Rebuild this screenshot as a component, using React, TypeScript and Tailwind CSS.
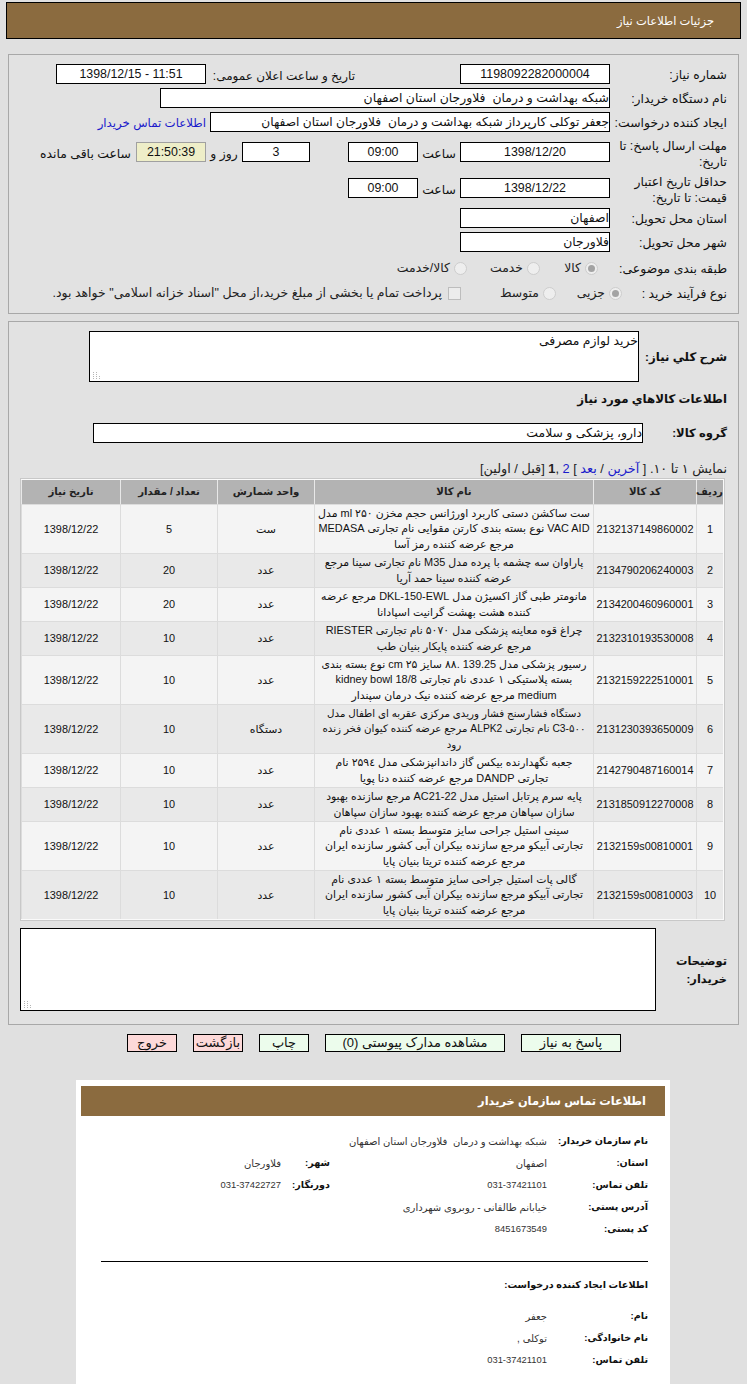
import React from "react";

const rows: [string, string, string, string, string, string, string][] = [
  ["1", "2132137149860002", "ست ساکشن دستی کاربرد اورژانس حجم مخزن ۲۵۰ ml مدل\nVAC AID نوع بسته بندی کارتن مقوایی نام تجارتی MEDASA\nمرجع عرضه کننده رمز آسا", "ست", "5", "1398/12/22", "h-[49px]"],
  ["2", "2134790206240003", "پاراوان سه چشمه با پرده مدل M35 نام تجارتی سینا مرجع\nعرضه کننده سینا حمد آریا", "عدد", "20", "1398/12/22", "h-[34px]"],
  ["3", "2134200460960001", "مانومتر طبی گاز اکسیژن مدل DKL-150-EWL مرجع عرضه\nکننده هشت بهشت گرانیت اسپادانا", "عدد", "20", "1398/12/22", "h-[34px]"],
  ["4", "2132310193530008", "چراغ قوه معاینه پزشکی مدل ۵۰۷۰ نام تجارتی RIESTER\nمرجع عرضه کننده پایکار بنیان طب", "عدد", "10", "1398/12/22", "h-[34px]"],
  ["5", "2132159222510001", "رسیور پزشکی مدل 139.25 .۸۸ سایز ۲۵ cm نوع بسته بندی\nبسته پلاستیکی ۱ عددی نام تجارتی kidney bowl 18/8\nmedium مرجع عرضه کننده نیک درمان سپندار", "عدد", "10", "1398/12/22", "h-[49px]"],
  ["6", "2131230393650009", "دستگاه فشارسنج فشار وریدی مرکزی عقربه ای اطفال مدل\nC3-۵۰۰ نام تجارتی ALPK2 مرجع عرضه کننده کیوان فخر زنده\nرود", "دستگاه", "10", "1398/12/22", "h-[49px]"],
  ["7", "2142790487160014", "جعبه نگهدارنده بیکس گاز داندانپزشکی مدل ۲۵۹٤ نام\nتجارتی DANDP مرجع عرضه کننده دنا پویا", "عدد", "10", "1398/12/22", "h-[34px]"],
  ["8", "2131850912270008", "پایه سرم پرتابل استیل مدل AC21-22 مرجع سازنده بهبود\nسازان سپاهان مرجع عرضه کننده بهبود سازان سپاهان", "عدد", "10", "1398/12/22", "h-[34px]"],
  ["9", "2132159s00810001", "سینی استیل جراحی سایز متوسط بسته ۱ عددی نام\nتجارتی آبیکو مرجع سازنده بیکران آبی کشور سازنده ایران\nمرجع عرضه کننده تریتا بنیان پایا", "عدد", "10", "1398/12/22", "h-[49px]"],
  ["10", "2132159s00810003", "گالی پات استیل جراحی سایز متوسط بسته ۱ عددی نام\nتجارتی آبیکو مرجع سازنده بیکران آبی کشور سازنده ایران\nمرجع عرضه کننده تریتا بنیان پایا", "عدد", "10", "1398/12/22", "h-[49px]"],
];

function Grip() {
  return (
    <svg className="absolute bottom-[2px] left-[2px]" width="8" height="8" viewBox="0 0 8 8">
      <path d="M1 1h1v1H1zM4 1h1v1H4zM1 3h1v1H1zM4 3h1v1H4zM1 5h1v1H1zM4 5h1v1H4zM1 7h1v1H1zM4 7h1v1H4zM7 5h1v1H7zM7 7h1v1H7z" fill="#b5b5b5" />
    </svg>
  );
}

function Box({ w, children, center = true }: { w: string; children?: React.ReactNode; center?: boolean }) {
  return (
    <div className={`${w} h-5 shrink-0 overflow-hidden bg-white border border-black leading-[18px] whitespace-pre ${center ? "text-center" : "text-right"}`}>
      {children}
    </div>
  );
}

function Radio({ checked }: { checked?: boolean }) {
  return (
    <span className="inline-flex w-[13px] h-[13px] shrink-0 items-center justify-center rounded-full border border-[#cdcdcd] bg-[#eeeeee]">
      {checked && <span className="w-[7px] h-[7px] rounded-full bg-[#a3a3a3]" />}
    </span>
  );
}

function Row({ label, className = "h-5", twoLine, children }: { label: React.ReactNode; className?: string; twoLine?: boolean; children?: React.ReactNode }) {
  return (
    <div className={`flex items-start ${className}`}>
      <div className={`w-[117px] shrink-0 whitespace-nowrap ${twoLine ? "leading-[16px] -mt-[4px]" : "leading-[17px] pt-[3px]"}`}>{label}</div>
      {children}
    </div>
  );
}

function Info({ label, value, small }: { label: string; value: string; small?: boolean }) {
  return (
    <div className="flex h-[22px] items-center">
      <div className="w-[101px] shrink-0 font-bold text-[9.6px] whitespace-nowrap">{label}</div>
      <div className={`text-[#333] whitespace-pre ${small ? "text-[10px]" : "text-[9.4px]"}`}>{value}</div>
    </div>
  );
}

export default function App() {
  return (
    <div dir="rtl" className="w-[747px] h-[1384px] overflow-hidden bg-[#e0e0e0] text-[12.4px] text-[#111] [font-family:'Liberation_Sans','DejaVu_Sans',sans-serif]">
      <div className="mx-[6px] mt-[2px] h-[37px] bg-[#8b6b3f] border border-black flex items-center pr-[26px] text-white text-[11.5px] pt-[2px]">
        جزئيات اطلاعات نياز
      </div>

      <div className="mt-[15px] mx-[8px] h-[260px] border border-[#a8a8a8] bg-[#e2e2e2] pt-[9px] pr-[11px]">
        <Row label="شماره نیاز:">
          <Box w="w-[150px]">1198092282000004</Box>
          <div className="w-[105px] shrink-0" />
          <div className="w-[149px] pt-[3px] shrink-0 whitespace-nowrap text-[12px]">تاریخ و ساعت اعلان عمومی:</div>
          <Box w="w-[150px]"><span dir="ltr">1398/12/15 - 11:51</span></Box>
        </Row>
        <Row label="نام دستگاه خریدار:" className="mt-[4px] h-5">
          <Box w="w-[450px]" center={false}>شبکه بهداشت و درمان  فلاورجان استان اصفهان</Box>
        </Row>
        <Row label="ایجاد کننده درخواست:" className="mt-[4px] h-5">
          <Box w="w-[400px]" center={false}><span className="text-[12.2px]">جعفر توکلی کارپرداز شبکه بهداشت و درمان  فلاورجان استان اصفهان</span></Box>
          <div className="pr-[4px] pt-[3px] text-[#1a1acb] text-[11.8px] whitespace-nowrap">اطلاعات تماس خریدار</div>
        </Row>
        <Row twoLine label={<>مهلت ارسال پاسخ: تا<br />تاریخ:</>} className="mt-[10px] h-[32px]">
          <Box w="w-[150px]">1398/12/20</Box>
          <div className="w-[42px] pt-[3px] shrink-0 text-center">ساعت</div>
          <Box w="w-[70px]">09:00</Box>
          <div className="w-[38px] shrink-0" />
          <Box w="w-[68px]">3</Box>
          <div className="w-[36px] pt-[3px] shrink-0 text-center">روز و</div>
          <div className="w-[70px] h-5 shrink-0 bg-[#eeeec8] border border-[#a0a0a0] text-center leading-[18px]">21:50:39</div>
          <div className="pr-[5px] pt-[3px] whitespace-nowrap">ساعت باقی مانده</div>
        </Row>
        <Row twoLine label={<>حداقل تاریخ اعتبار<br />قیمت: تا تاریخ:</>} className="mt-[4px] h-[26px]">
          <Box w="w-[150px]">1398/12/22</Box>
          <div className="w-[42px] pt-[3px] shrink-0 text-center">ساعت</div>
          <Box w="w-[70px]">09:00</Box>
        </Row>
        <Row label="استان محل تحویل:" className="mt-[4px] h-5">
          <Box w="w-[150px]" center={false}>اصفهان</Box>
        </Row>
        <Row label="شهر محل تحویل:" className="mt-[4px] h-5">
          <Box w="w-[150px]" center={false}>فلاورجان</Box>
        </Row>
        <Row label="طبقه بندی موضوعی:" className="mt-[6px] h-5">
          <div className="flex items-center h-5 pr-[12px] text-[#222]">
            <Radio checked />
            <span className="pr-[4px] w-[45px]">کالا</span>
            <Radio />
            <span className="pr-[4px] w-[60px]">خدمت</span>
            <Radio />
            <span className="pr-[4px] whitespace-nowrap">کالا/خدمت</span>
          </div>
        </Row>
        <Row label="نوع فرآیند خرید :" className="mt-[5px] h-5">
          <div className="flex items-center h-5 -mr-[12px] text-[#222]">
            <Radio checked />
            <span className="pr-[4px] w-[53px]">جزیی</span>
            <Radio />
            <span className="pr-[4px] w-[82px]">متوسط</span>
            <span className="w-[13px] h-[13px] shrink-0 bg-[#ececec] border border-[#bdbdbd]" />
            <span className="pr-[6px] whitespace-nowrap text-[12.5px]">پرداخت تمام یا بخشی از مبلغ خرید،از محل "اسناد خزانه اسلامی" خواهد بود.</span>
          </div>
        </Row>
      </div>

      <div className="mt-[7px] mx-[8px] h-[704px] border border-[#a8a8a8] bg-[#e2e2e2] pt-[9px]">
        <div className="flex h-[51px] pr-[11px]">
          <div className="w-[88px] shrink-0 font-bold text-[11.8px] pt-[18px] whitespace-nowrap">شرح کلي نیاز:</div>
          <div className="relative w-[550px] h-[51px] bg-white border border-black text-right leading-[18px]">
            خرید لوازم مصرفی
            <Grip />
          </div>
        </div>
        <div className="h-[40px] pt-[9px] pr-[11px] font-bold text-[11.8px]">اطلاعات کالاهاي مورد نياز</div>
        <div className="flex h-[20px] mt-[1px] pr-[11px]">
          <div className="w-[84px] shrink-0 font-bold text-[11.6px] leading-[20px]">گروه کالا:</div>
          <div className="w-[550px] h-[20px] bg-white border border-black leading-[18px]">دارو، پزشکی و سلامت</div>
        </div>
        <div className="mt-[17px] pr-[11px] h-[18px] leading-[18px] whitespace-nowrap text-[#222] text-[12.8px]">
          نمایش ۱ تا ۱۰. [ <span className="text-[#1a1acb]">آخرین</span> / <span className="text-[#1a1acb]">بعد</span> ] <span className="text-[#1a1acb]">2</span> ,<b>1</b> [قبل / اولین]
        </div>
        <div className="mx-[13px] w-[705px] bg-[#fafafa] border border-[#c8c8c8] p-[1px]">
          <table className="w-full table-fixed border-separate border-spacing-0 text-center text-[10.9px]">
            <colgroup>
              <col className="w-[27px]" />
              <col className="w-[103px]" />
              <col className="w-[279px]" />
              <col className="w-[97px]" />
              <col className="w-[97px]" />
              <col className="w-[99px]" />
            </colgroup>
            <thead>
              <tr className="h-[24px] bg-[#b3b3b3] text-[#222] text-[10.2px]">
                {["ردیف", "کد کالا", "نام کالا", "واحد شمارش", "تعداد / مقدار", "تاریخ نیاز"].map((h) => (
                  <th key={h} className="border-l border-[#e8e8e8] font-bold p-0 whitespace-nowrap">{h}</th>
                ))}
              </tr>
            </thead>
            <tbody>
              {rows.map((r, i) => (
                <tr key={r[0]} className={`${r[6]} ${i % 2 === 0 ? "bg-[#f4f4f4]" : "bg-[#e9e9e9]"}`}>
                  {r.slice(0, 6).map((c, j) => (
                    <td key={j} className={`border-l border-t border-[#dcdcdc] p-0 ${j === 2 ? `px-[2px] leading-[15.5px] whitespace-pre-line ${i === 5 ? "text-[10.3px]" : ""}` : ""}`}>{c}</td>
                  ))}
                </tr>
              ))}
            </tbody>
          </table>
        </div>
        <div className="flex mt-[7px] pr-[11px]">
          <div className="w-[71px] shrink-0 font-bold text-[11.4px] leading-[18px] pt-[24px]">توضیحات خریدار:</div>
          <div className="relative w-[636px] h-[83px] bg-white border border-black"><Grip /></div>
        </div>
      </div>

      <div className="flex h-[18px] mt-[9px] pr-[126px] gap-[16px] text-[13px] leading-[16px] text-center whitespace-nowrap">
        <div className="w-[100px] border border-black bg-[#ecfcec]">پاسخ به نیاز</div>
        <div className="w-[180px] border border-black bg-[#ecfcec]">مشاهده مدارک پیوستی (0)</div>
        <div className="w-[50px] border border-black bg-[#ecfcec]">چاپ</div>
        <div className="w-[50px] border border-black bg-[#fdd9d9]">بازگشت</div>
        <div className="w-[50px] border border-black bg-[#fdd9d9]">خروج</div>
      </div>

      <div className="mt-[28px] mr-[77px] w-[594px] h-[400px] bg-white pt-[6px] px-[5px]">
        <div className="h-[30px] bg-[#8b6b3f] text-white font-bold text-[11.4px] leading-[30px] pr-[19px]">اطلاعات تماس سازمان خریدار</div>
        <div className="pr-[17px] pl-[20px] pt-[14px]">
          <Info label="نام سازمان خریدار:" value="شبکه بهداشت و درمان  فلاورجان استان اصفهان" small />
          <div className="flex">
            <div className="w-[318px]"><Info label="استان:" value="اصفهان" small /></div>
            <div className="flex h-[22px] items-center"><div className="w-[49px] font-bold text-[9.6px]">شهر:</div><div className="text-[10px] text-[#333]">فلاورجان</div></div>
          </div>
          <div className="flex">
            <div className="w-[318px]"><Info label="تلفن تماس:" value="031-37421101" /></div>
            <div className="flex h-[22px] items-center"><div className="w-[49px] font-bold text-[9.6px]">دورنگار:</div><div className="text-[9.4px] text-[#333]">031-37422727</div></div>
          </div>
          <Info label="آدرس پستی:" value="خیابانم طالقانی - روبروی شهرداری" small />
          <Info label="کد پستی:" value="8451673549" />
          <div className="mt-[21px] h-px bg-black" />
          <div className="font-bold text-[9.6px] mt-[12px] h-[22px] leading-[22px]">اطلاعات ایجاد کننده درخواست:</div>
          <div className="h-[9px]" />
          <Info label="نام:" value="جعفر" small />
          <Info label="نام خانوادگی:" value="توکلی ," small />
          <Info label="تلفن تماس:" value="031-37421101" />
        </div>
      </div>
    </div>
  );
}
